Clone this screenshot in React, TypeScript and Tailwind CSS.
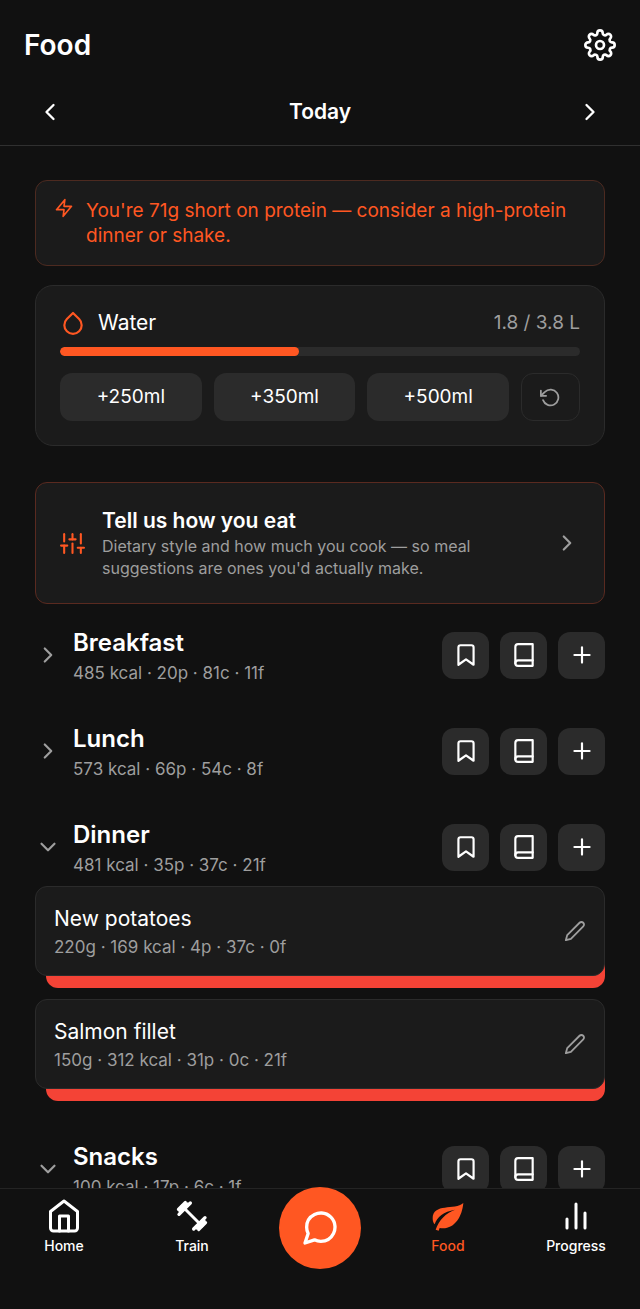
import { useState } from 'react'
import type { ReactNode } from 'react'
import {
  FiBarChart2,
  FiBook,
  FiBookmark,
  FiChevronDown,
  FiChevronLeft,
  FiChevronRight,
  FiDroplet,
  FiEdit2,
  FiHome,
  FiMessageCircle,
  FiPlus,
  FiRotateCcw,
  FiSettings,
  FiSliders,
  FiZap,
} from 'react-icons/fi'

type FoodItem = {
  name: string
  grams: number
  kcal: number
  macros: string
}

type Meal = {
  id: string
  name: string
  kcal: number
  macros: string
  items: FoodItem[]
}

// ── data ─────────────────────────────────────────────────────────

const MEALS: Meal[] = [
  { id: 'breakfast', name: 'Breakfast', kcal: 485, macros: '20p · 81c · 11f', items: [] },
  { id: 'lunch',     name: 'Lunch',     kcal: 573, macros: '66p · 54c · 8f',  items: [] },
  {
    id: 'dinner',
    name: 'Dinner',
    kcal: 481,
    macros: '35p · 37c · 21f',
    items: [
      { name: 'New potatoes',  grams: 220, kcal: 169, macros: '4p · 37c · 0f' },
      { name: 'Salmon fillet', grams: 150, kcal: 312, macros: '31p · 0c · 21f' },
    ],
  },
  { id: 'snacks', name: 'Snacks', kcal: 100, macros: '17p · 6c · 1f', items: [] },
]

const WATER_GOAL = 3.8
const WATER_START = 1.75
const WATER_STEPS = [250, 350, 500]

// ── header ───────────────────────────────────────────────────────

function Header() {
  return (
    <header className="shrink-0 border-b border-[#303030] pt-5">
      <div className="flex h-[50px] items-center justify-between px-6">
        <h1 className="text-[28px] leading-9 font-semibold">Food</h1>
        <button aria-label="Settings">
          <FiSettings size={32} />
        </button>
      </div>
      <div className="mt-[9px] flex h-[66px] items-center justify-between px-9">
        <button aria-label="Previous day">
          <FiChevronLeft size={28} />
        </button>
        <span className="text-[21px] leading-7 font-semibold">Today</span>
        <button aria-label="Next day">
          <FiChevronRight size={28} />
        </button>
      </div>
    </header>
  )
}

// ── cards ────────────────────────────────────────────────────────

function TipCard() {
  return (
    <div className="flex gap-3 rounded-xl border border-[#4d2a20] bg-[#1b1b1b] px-[18px] py-[17px] text-[#ff5722]">
      <FiZap size={20} className="shrink-0" />
      <p className="text-[19px] leading-[25px]">You're 71g short on protein — consider a high-protein dinner or shake.</p>
    </div>
  )
}

function WaterCard() {
  const [litres, setLitres] = useState(WATER_START)
  const percent = Math.min(100, (litres / WATER_GOAL) * 100)

  return (
    <section className="mt-[19px] rounded-[18px] border border-[#2b2b2b] bg-[#1b1b1b] p-6">
      <div className="flex h-[26px] items-center gap-3">
        <FiDroplet size={26} className="text-[#ff5722]" />
        <h2 className="text-[21px] leading-6">Water</h2>
        <span className="ml-auto text-[19px] leading-6 text-[#9e9e9e]">
          {litres.toFixed(1)} / {WATER_GOAL} L
        </span>
      </div>
      <div className="mt-[11px] h-[9px] overflow-hidden rounded-full bg-[#2b2b2b]">
        <div className="h-full rounded-full bg-[#ff5722]" style={{ width: `${percent}%` }} />
      </div>
      <div className="mt-[17px] flex gap-3">
        {WATER_STEPS.map((ml) => (
          <button
            key={ml}
            onClick={() => setLitres((l) => l + ml / 1000)}
            className="h-12 flex-1 rounded-xl bg-[#2b2b2b] text-[19px] leading-6"
          >
            +{ml}ml
          </button>
        ))}
        <button
          aria-label="Undo"
          onClick={() => setLitres(WATER_START)}
          className="flex h-12 w-[59px] items-center justify-center rounded-xl border border-[#2b2b2b] text-[#9e9e9e]"
        >
          <FiRotateCcw size={21} />
        </button>
      </div>
    </section>
  )
}

function PreferencesCard() {
  return (
    <button className="mt-9 flex w-full items-center rounded-xl border border-[#5a2a20] bg-[#1b1b1b] p-6 text-left">
      <FiSliders size={25} className="shrink-0 text-[#ff5722]" />
      <span className="ml-[17px] flex-1 pr-12">
        <span className="block text-[21px] leading-7 font-semibold">Tell us how you eat</span>
        <span className="block text-[16px] leading-[22px] text-[#9e9e9e]">
          Dietary style and how much you cook — so meal suggestions are ones you'd actually make.
        </span>
      </span>
      <FiChevronRight size={26} className="shrink-0 text-[#9e9e9e]" />
    </button>
  )
}

// ── meals ────────────────────────────────────────────────────────

function TileButton({ label, children }: { label: string; children: ReactNode }) {
  return (
    <button aria-label={label} className="flex size-[47px] items-center justify-center rounded-xl bg-[#2b2b2b]">
      {children}
    </button>
  )
}

function FoodRow({ item }: { item: FoodItem }) {
  return (
    <li className="grid">
      {/* delete action sits behind the card */}
      <div className="col-start-1 row-start-1 mt-8 ml-[11px] rounded-xl bg-[#f44336]" />
      <div className="col-start-1 row-start-1 mb-3 flex h-[90px] items-center justify-between rounded-xl border border-[#2b2b2b] bg-[#1b1b1b] px-[18px]">
        <div>
          <h3 className="text-[21px] leading-8">{item.name}</h3>
          <p className="text-[17px] leading-6 text-[#9e9e9e]">
            {item.grams}g · {item.kcal} kcal · {item.macros}
          </p>
        </div>
        <button aria-label={`Edit ${item.name}`} className="text-[#9e9e9e]">
          <FiEdit2 size={22} />
        </button>
      </div>
    </li>
  )
}

function MealSection({ meal, open, onToggle }: { meal: Meal; open: boolean; onToggle: () => void }) {
  return (
    <section className="mb-[18px]">
      <div className="flex h-[78px] items-center gap-[11px]">
        <button onClick={onToggle} aria-expanded={open} className="flex flex-1 items-center gap-3 text-left">
          {open
            ? <FiChevronDown size={26} className="shrink-0 text-[#9e9e9e]" />
            : <FiChevronRight size={26} className="shrink-0 text-[#9e9e9e]" />}
          <span>
            <span className="block text-[24px] leading-9 font-semibold">{meal.name}</span>
            <span className="block text-[17px] leading-6 text-[#9e9e9e]">{meal.kcal} kcal · {meal.macros}</span>
          </span>
        </button>
        <TileButton label="Saved meals"><FiBookmark size={26} /></TileButton>
        <TileButton label="Recipes"><FiBook size={26} /></TileButton>
        <TileButton label="Add food"><FiPlus size={26} /></TileButton>
      </div>
      {open && (
        <ul className="flex flex-col gap-[11px] pb-[11px]">
          {meal.items.map((item) => <FoodRow key={item.name} item={item} />)}
        </ul>
      )}
    </section>
  )
}

// ── bottom nav ───────────────────────────────────────────────────

function DumbbellIcon() {
  return (
    <svg width="36" height="36" viewBox="0 0 108 108" fill="none" stroke="currentColor" strokeLinecap="round" aria-hidden="true">
      <path d="M24 24L84 84" strokeWidth="9" />
      <path d="M15 49L49 15M59 93L93 59" strokeWidth="10" />
      <path d="M19 39L39 19M69 89L89 69" strokeWidth="12" />
      <path d="M13 34L34 13M74 95L95 74" strokeWidth="9" />
    </svg>
  )
}

function LeafIcon() {
  return (
    <svg width="36" height="36" viewBox="331 205 108 108" fill="currentColor" aria-hidden="true">
      <path d="M431 220C405 243 340 219 339 266C339 274 341 280 345 284C352 262 372 246 406 240C378 251 358 270 348 300L357 303L360 295C402 302 427 264 431 220Z" />
    </svg>
  )
}

function NavLink({ label, active = false, children }: { label: string; active?: boolean; children: ReactNode }) {
  return (
    <a
      href="#"
      aria-current={active ? 'page' : undefined}
      className={`flex flex-1 flex-col items-center pt-[9px] ${active ? 'text-[#ff5722]' : 'text-white'}`}
    >
      {children}
      <span className="mt-0.5 text-[14px] leading-5 font-medium">{label}</span>
    </a>
  )
}

function BottomNav() {
  return (
    <nav className="flex h-[121px] shrink-0 border-t border-[#242424]">
      <NavLink label="Home"><FiHome size={36} /></NavLink>
      <NavLink label="Train"><DumbbellIcon /></NavLink>
      <div className="flex flex-1 justify-center">
        <button
          aria-label="Chat"
          className="-mt-0.5 flex size-[82px] items-center justify-center rounded-full bg-[#ff5722]"
        >
          <FiMessageCircle size={40} />
        </button>
      </div>
      <NavLink label="Food" active><LeafIcon /></NavLink>
      <NavLink label="Progress"><FiBarChart2 size={36} /></NavLink>
    </nav>
  )
}

// ── page ─────────────────────────────────────────────────────────

export default function App() {
  const [openMeals, setOpenMeals] = useState<Set<string>>(new Set(['dinner', 'snacks']))

  function toggleMeal(id: string) {
    setOpenMeals((prev) => {
      const next = new Set(prev)
      next.has(id) ? next.delete(id) : next.add(id)
      return next
    })
  }

  return (
    <div className="flex h-screen flex-col bg-[#111111] font-['Inter',sans-serif] text-white">
      <Header />
      <main className="min-h-0 flex-1 overflow-y-auto px-[35px] pt-[34px] [scrollbar-width:none]">
        <TipCard />
        <WaterCard />
        <PreferencesCard />
        <div className="mt-3">
          {MEALS.map((meal) => (
            <MealSection
              key={meal.id}
              meal={meal}
              open={openMeals.has(meal.id)}
              onToggle={() => toggleMeal(meal.id)}
            />
          ))}
        </div>
      </main>
      <BottomNav />
    </div>
  )
}
